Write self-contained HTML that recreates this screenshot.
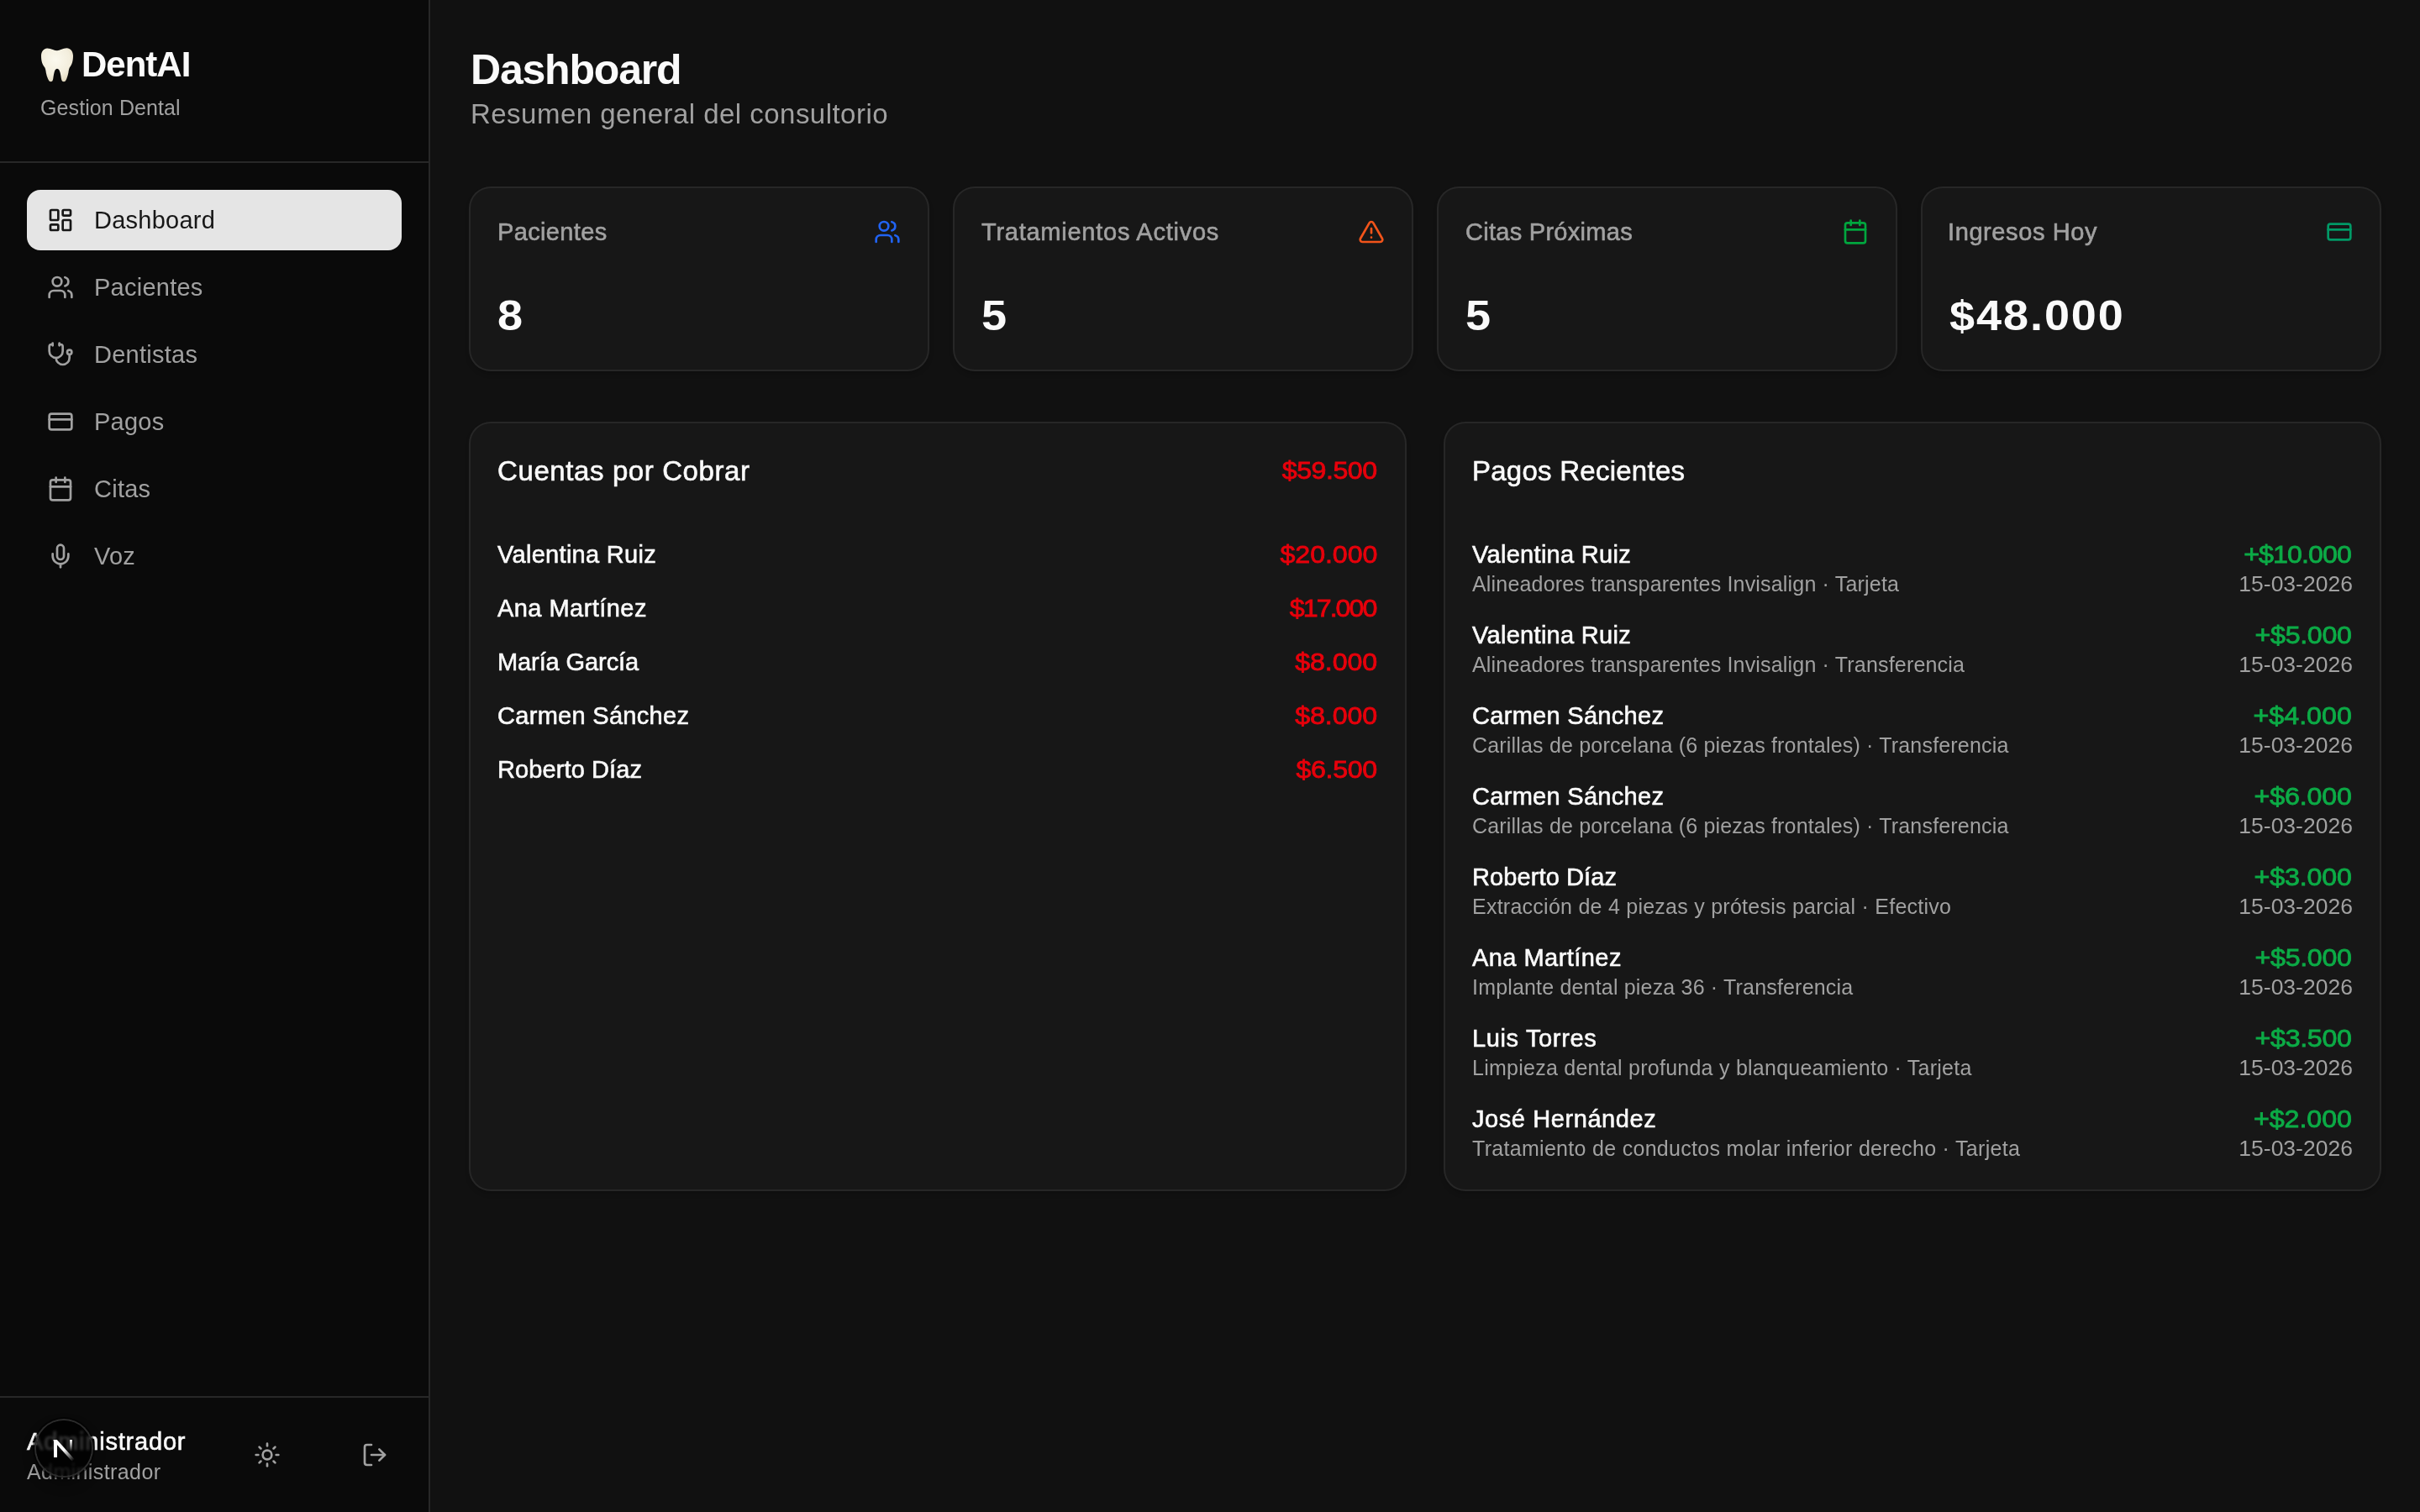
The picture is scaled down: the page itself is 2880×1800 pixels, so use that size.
<!DOCTYPE html>
<html lang="es">
<head>
<meta charset="utf-8">
<title>DentAI - Dashboard</title>
<style>
*{box-sizing:border-box;margin:0;padding:0}
html,body{width:2880px;height:1800px;overflow:hidden;background:#111111}
body{font-family:"Liberation Sans",sans-serif;color:#fafafa;-webkit-font-smoothing:antialiased}
#app{position:relative;width:2880px;height:1800px;overflow:hidden;background:#111111;will-change:transform}
svg{display:block}
.ic{fill:none;stroke:currentColor;stroke-width:2;stroke-linecap:round;stroke-linejoin:round}

/* ---------- sidebar ---------- */
aside{position:absolute;left:0;top:0;width:512px;height:1800px;background:#0a0a0a;border-right:2px solid #272727}
.brand{position:absolute;left:0;top:0;width:510px;height:194px;border-bottom:2px solid #272727}
.brand .tooth{position:absolute;left:48px;top:56px;width:40px;height:42px}
.brand h1{position:absolute;left:97px;top:49px;font-size:42px;line-height:56px;font-weight:700;color:#fafafa;letter-spacing:-1px;white-space:nowrap}
.brand p{position:absolute;left:48px;top:112px;font-size:25px;line-height:32px;color:#a1a1a1;letter-spacing:0.1px;white-space:nowrap}
nav{position:absolute;left:32px;top:226px;width:446px}
nav a{display:flex;align-items:center;height:72px;margin-bottom:8px;padding:0 24px;border-radius:16px;color:#a1a1a1;font-size:29px;line-height:40px;text-decoration:none;letter-spacing:0.25px;white-space:nowrap}
nav a svg{width:32px;height:32px;margin-right:24px;flex:none}
nav a.on{background:#e5e5e5;color:#171717}
.user{position:absolute;left:0;top:1662px;width:510px;height:138px;border-top:2px solid #272727}
.user .n1{position:absolute;left:32px;top:32px;font-size:29px;line-height:40px;font-weight:500;color:#fafafa;letter-spacing:0.8px;white-space:nowrap}
.user .n2{position:absolute;left:32px;top:72px;font-size:25px;line-height:32px;color:#a1a1a1;letter-spacing:0.4px;white-space:nowrap}
.user .b{position:absolute;top:52px;width:32px;height:32px;color:#a1a1a1}
.user .b svg{width:32px;height:32px}
.devn{position:absolute;left:43px;top:1691px;width:66px;height:66px;border-radius:50%;background:rgba(0,0,0,.8);-webkit-backdrop-filter:blur(1.5px);backdrop-filter:blur(1.5px);box-shadow:0 0 0 2px #2c2c2c,0 0 0 4px rgba(0,0,0,.55),0 8px 16px rgba(0,0,0,.4);overflow:hidden}
.devn .nn{position:absolute;left:0;top:22.7px;width:66px;height:44px;overflow:hidden}
.devn i{position:absolute;display:block}
.devn .s1{left:20.7px;top:0;width:4px;height:21.3px;background:#fff}
.devn .s2{left:31.2px;top:-4.5px;width:4.4px;height:34px;background:linear-gradient(#fff 50%,rgba(255,255,255,0));transform:rotate(-42deg);transform-origin:50% 50%}
.devn .s3{left:39.5px;top:0;width:3.8px;height:14px;background:linear-gradient(#fff,rgba(255,255,255,0))}

/* ---------- main ---------- */
main{position:absolute;left:512px;top:0;width:2368px;height:1800px}
.ttl{position:absolute;left:48px;top:51px;font-size:50px;line-height:64px;font-weight:700;color:#fafafa;white-space:nowrap;letter-spacing:-1.2px}
.sub{position:absolute;left:48px;top:112px;font-size:33px;line-height:48px;color:#a1a1a1;white-space:nowrap;letter-spacing:0.47px}
.card{position:absolute;background:#171717;border-radius:24px;box-shadow:0 0 0 2px #272727,0 4px 6px rgba(0,0,0,.25)}
.stat{top:224px;width:544px;height:216px}
.stat .l{position:absolute;left:32px;top:32px;font-size:29px;line-height:40px;font-weight:500;color:#a1a1a1;white-space:nowrap;letter-spacing:0.6px}
.stat .v{position:absolute;left:32px;top:120px;font-size:50px;line-height:64px;font-weight:700;color:#fafafa;white-space:nowrap;letter-spacing:1.8px;transform:scaleX(1.08);transform-origin:0 50%}
.stat svg{position:absolute;right:32px;top:36px;width:32px;height:32px}
.big{top:504px;width:1112px;height:912px}
.big h2{position:absolute;left:32px;top:33px;font-size:33px;line-height:48px;font-weight:500;color:#fafafa;white-space:nowrap;letter-spacing:0.6px}
.big .tot{position:absolute;right:32px;top:36px;font-size:29px;line-height:40px;font-weight:400;-webkit-text-stroke:0.8px currentColor;color:#e7000b;white-space:nowrap;transform:translateX(-1px) scaleX(1.11);transform-origin:100% 50%;letter-spacing:-0.46px;margin-right:0.51px}
.rows{position:absolute;left:32px;right:32px;top:136px}
.r{display:flex;justify-content:space-between;margin-bottom:24px;white-space:nowrap}
.r .a{font-size:29px;line-height:40px;font-weight:500;color:#fafafa;letter-spacing:var(--l,0.3px)}
.r .m{font-size:29px;line-height:40px;font-weight:400;-webkit-text-stroke:0.8px currentColor;text-align:right;transform:translateX(-1px) scaleX(1.11);transform-origin:100% 50%;letter-spacing:var(--l,0px);margin-right:calc(-1.11*var(--l,0px))}
.r .d{position:relative;top:-1px;font-size:25px;line-height:32px;color:#a1a1a1;letter-spacing:var(--l,0.3px)}
.r .rt .d{letter-spacing:0;transform:scaleX(1.06);transform-origin:100% 50%}
.r .rt{text-align:right}
.stat .l,.big h2,.r .a,.user .n1{-webkit-text-stroke:0.6px currentColor}
@media (max-width:2000px){html,body{width:1440px;height:900px}#app{zoom:.5}}
.red{color:#e7000b}
.grn{color:#0cab46}
</style>
</head>
<body>
<div id="app">
<aside>
  <div class="brand">
    <svg class="tooth" viewBox="0 0 40 42"><defs><radialGradient id="tg" cx="45%" cy="35%" r="75%"><stop offset="0" stop-color="#fbf9ee"/><stop offset=".6" stop-color="#f3eedd"/><stop offset="1" stop-color="#ddd3b6"/></radialGradient></defs><path d="M20 4.3C17 4.3 13 1.4 8.1 1.4 4.5 1.4 1 5 1 10.4c0 3.600.5 6.100 1.200 8.500C3 21.500 4.600 23 5.400 24.600c.9 1.900 1.100 3.900 1.400 5.800C7.200 33 8 35.500 9.100 38c.9 2 1.900 3.300 3.400 3.300s2.400-1.300 2.700-3.300c.3-2 .6-5 1.300-7.600C17 28.300 18 25.800 20 25.800s3 2.500 3.600 4.600c.7 2.600 1 5.600 1.400 7.600.3 2 1.300 3.300 3 3.300 1.500 0 2.400-1.300 3.200-3.300 1-2.500 1.700-5 2.200-7.600.3-1.900.5-3.900 1.400-5.800.8-1.600 2.200-3.100 3-5.700.7-2.400 1.200-4.900 1.200-8.500C39 5 35.500 1.300 31.500 1.300 27 1.300 23 4.300 20 4.300z" fill="url(#tg)"/></svg>
    <h1>DentAI</h1>
    <p>Gestion Dental</p>
  </div>
  <nav>
    <a class="on"><svg class="ic" viewBox="0 0 24 24"><rect width="7" height="9" x="3" y="3" rx="1"/><rect width="7" height="5" x="14" y="3" rx="1"/><rect width="7" height="9" x="14" y="12" rx="1"/><rect width="7" height="5" x="3" y="16" rx="1"/></svg>Dashboard</a>
    <a><svg class="ic" viewBox="0 0 24 24"><path d="M16 21v-2a4 4 0 0 0-4-4H6a4 4 0 0 0-4 4v2"/><circle cx="9" cy="7" r="4"/><path d="M22 21v-2a4 4 0 0 0-3-3.87"/><path d="M16 3.13a4 4 0 0 1 0 7.75"/></svg>Pacientes</a>
    <a><svg class="ic" viewBox="0 0 24 24"><path d="M11 2v2"/><path d="M5 2v2"/><path d="M5 3H4a2 2 0 0 0-2 2v4a6 6 0 0 0 12 0V5a2 2 0 0 0-2-2h-1"/><path d="M8 15a6 6 0 0 0 12 0v-3"/><circle cx="20" cy="10" r="2"/></svg>Dentistas</a>
    <a><svg class="ic" viewBox="0 0 24 24"><rect width="20" height="14" x="2" y="5" rx="2"/><line x1="2" x2="22" y1="10" y2="10"/></svg>Pagos</a>
    <a><svg class="ic" viewBox="0 0 24 24"><path d="M8 2v4"/><path d="M16 2v4"/><rect width="18" height="18" x="3" y="4" rx="2"/><path d="M3 10h18"/></svg>Citas</a>
    <a><svg class="ic" viewBox="0 0 24 24"><path d="M12 19v3"/><path d="M19 10v2a7 7 0 0 1-14 0v-2"/><rect x="9" y="2" width="6" height="13" rx="3"/></svg>Voz</a>
  </nav>
  <div class="user">
    <div class="n1">Administrador</div>
    <div class="n2">Administrador</div>
    <div class="b" style="left:302px"><svg class="ic" viewBox="0 0 24 24"><circle cx="12" cy="12" r="4"/><path d="M12 2v2"/><path d="M12 20v2"/><path d="m4.93 4.93 1.41 1.41"/><path d="m17.66 17.66 1.41 1.41"/><path d="M2 12h2"/><path d="M20 12h2"/><path d="m6.34 17.66-1.41 1.41"/><path d="m19.07 4.93-1.41 1.41"/></svg></div>
    <div class="b" style="left:430px"><svg class="ic" viewBox="0 0 24 24"><path d="M9 21H5a2 2 0 0 1-2-2V5a2 2 0 0 1 2-2h4"/><polyline points="16 17 21 12 16 7"/><line x1="21" x2="9" y1="12" y2="12"/></svg></div>
  </div>
  <div class="devn"><div class="nn"><i class="s1"></i><i class="s2"></i><i class="s3"></i></div></div>
</aside>
<main>
  <div class="ttl">Dashboard</div>
  <div class="sub">Resumen general del consultorio</div>

  <div class="card stat" style="left:48px"><div class="l" style="letter-spacing:.35px">Pacientes</div><svg class="ic" style="color:#2163f3" viewBox="0 0 24 24"><path d="M16 21v-2a4 4 0 0 0-4-4H6a4 4 0 0 0-4 4v2"/><circle cx="9" cy="7" r="4"/><path d="M22 21v-2a4 4 0 0 0-3-3.87"/><path d="M16 3.13a4 4 0 0 1 0 7.75"/></svg><div class="v">8</div></div>
  <div class="card stat" style="left:624px"><div class="l" style="letter-spacing:.75px">Tratamientos Activos</div><svg class="ic" style="color:#f2541a" viewBox="0 0 24 24"><path d="m21.73 18-8-14a2 2 0 0 0-3.48 0l-8 14A2 2 0 0 0 4 21h16a2 2 0 0 0 1.73-3"/><path d="M12 9v4"/><path d="M12 17h.01"/></svg><div class="v">5</div></div>
  <div class="card stat" style="left:1200px"><div class="l" style="letter-spacing:.28px">Citas Próximas</div><svg class="ic" style="color:#00a63e" viewBox="0 0 24 24"><path d="M8 2v4"/><path d="M16 2v4"/><rect width="18" height="18" x="3" y="4" rx="2"/><path d="M3 10h18"/></svg><div class="v">5</div></div>
  <div class="card stat" style="left:1776px"><div class="l" style="margin-left:-2px">Ingresos Hoy</div><svg class="ic" style="color:#009966" viewBox="0 0 24 24"><rect width="20" height="14" x="2" y="5" rx="2"/><line x1="2" x2="22" y1="10" y2="10"/></svg><div class="v">$48.000</div></div>
  <div class="card big" style="left:48px"><h2>Cuentas por Cobrar</h2><div class="tot">$59.500</div><div class="rows">
    <div class="r"><div class="a">Valentina Ruiz</div><div class="m red" style="--l:-0.08px">$20.000</div></div>
    <div class="r"><div class="a" style="--l:0.45px">Ana Martínez</div><div class="m red" style="--l:-1.77px">$17.000</div></div>
    <div class="r"><div class="a" style="--l:-0.1px">María García</div><div class="m red" style="--l:-0.13px">$8.000</div></div>
    <div class="r"><div class="a">Carmen Sánchez</div><div class="m red" style="--l:-0.13px">$8.000</div></div>
    <div class="r"><div class="a" style="--l:0.1px">Roberto Díaz</div><div class="m red" style="--l:-0.31px">$6.500</div></div>
  </div></div>
  <div class="card big" style="left:1208px"><h2 style="letter-spacing:.25px">Pagos Recientes</h2><div class="rows">
    <div class="r"><div><div class="a">Valentina Ruiz</div><div class="d" style="--l:0.18px">Alineadores transparentes Invisalign · Tarjeta</div></div><div class="rt"><div class="m grn" style="--l:-0.83px">+$10.000</div><div class="d">15-03-2026</div></div></div>
    <div class="r"><div><div class="a">Valentina Ruiz</div><div class="d" style="--l:0.18px">Alineadores transparentes Invisalign · Transferencia</div></div><div class="rt"><div class="m grn" style="--l:-0.29px">+$5.000</div><div class="d">15-03-2026</div></div></div>
    <div class="r"><div><div class="a">Carmen Sánchez</div><div class="d" style="--l:0.18px">Carillas de porcelana (6 piezas frontales) · Transferencia</div></div><div class="rt"><div class="m grn" style="--l:0.02px">+$4.000</div><div class="d">15-03-2026</div></div></div>
    <div class="r"><div><div class="a">Carmen Sánchez</div><div class="d" style="--l:0.18px">Carillas de porcelana (6 piezas frontales) · Transferencia</div></div><div class="rt"><div class="m grn" style="--l:-0.14px">+$6.000</div><div class="d">15-03-2026</div></div></div>
    <div class="r"><div><div class="a" style="--l:0.1px">Roberto Díaz</div><div class="d" style="--l:0.25px">Extracción de 4 piezas y prótesis parcial · Efectivo</div></div><div class="rt"><div class="m grn" style="--l:-0.14px">+$3.000</div><div class="d">15-03-2026</div></div></div>
    <div class="r"><div><div class="a" style="--l:0.45px">Ana Martínez</div><div class="d" style="--l:0.18px">Implante dental pieza 36 · Transferencia</div></div><div class="rt"><div class="m grn" style="--l:-0.29px">+$5.000</div><div class="d">15-03-2026</div></div></div>
    <div class="r"><div><div class="a" style="--l:0.64px">Luis Torres</div><div class="d" style="--l:0.25px">Limpieza dental profunda y blanqueamiento · Tarjeta</div></div><div class="rt"><div class="m grn" style="--l:-0.29px">+$3.500</div><div class="d">15-03-2026</div></div></div>
    <div class="r"><div><div class="a" style="--l:0.58px">José Hernández</div><div class="d">Tratamiento de conductos molar inferior derecho · Tarjeta</div></div><div class="rt"><div class="m grn" style="--l:-0.06px">+$2.000</div><div class="d">15-03-2026</div></div></div>
  </div></div>
</main>
</div>
</body>
</html>
